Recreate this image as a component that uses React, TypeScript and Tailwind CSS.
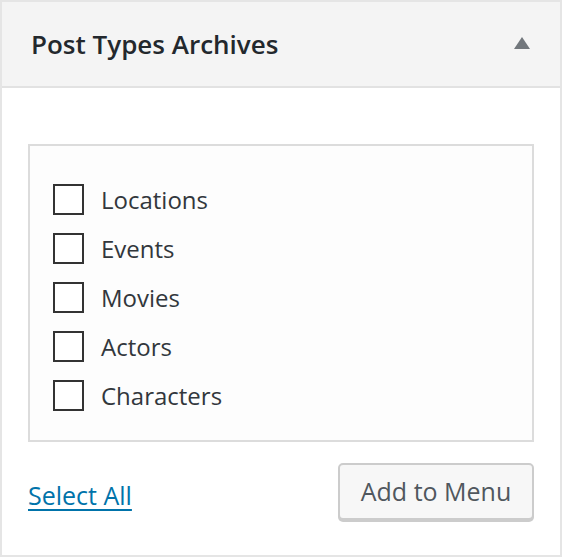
import React from 'react';

const items = ['Locations', 'Events', 'Movies', 'Actors', 'Characters'];

const App: React.FC = () => {
    return (
        <div
            className="w-[562px] h-[557px] border-2 border-[#e5e5e5] bg-white flex flex-col"
            style={{ fontFamily: '"Open Sans", "Noto Sans", sans-serif' }}
        >
            <div className="h-[86px] shrink-0 bg-[#f4f4f4] border-b-2 border-[#e2e2e2] flex items-center justify-between pl-[29px] pr-[30px]">
                <h2 className="text-[26px] font-semibold text-[#23282d] leading-none -mt-[1px]">
                    Post Types Archives
                </h2>
                <svg width="16" height="12" viewBox="0 0 16 12" className="-mt-[2px]">
                    <polygon points="8,0 16,12 0,12" fill="#72777c" />
                </svg>
            </div>
            <div className="px-[26px] pt-[56px]">
                <div className="h-[298px] border-2 border-[#dcdcdc] bg-[#fdfdfd] pl-[23px] pt-[38px]">
                    <ul className="flex flex-col gap-[18px]">
                        {items.map((item) => (
                            <li key={item} className="flex items-center h-[31px]">
                                <span className="w-[31px] h-[31px] border-2 border-[#333] bg-white shrink-0" />
                                <span className="ml-[17px] text-[24px] text-[#32373c] leading-none">
                                    {item}
                                </span>
                            </li>
                        ))}
                    </ul>
                </div>
                <div className="flex items-center justify-between mt-[21px]">
                    <a
                        href="#"
                        className="text-[25px] text-[#0073aa] underline underline-offset-[4px] decoration-2 mt-[8px]"
                    >
                        Select All
                    </a>
                    <button
                        type="button"
                        className="w-[196px] h-[57px] rounded-[5px] border-2 border-[#cccccc] bg-[#f7f7f7] shadow-[0_2px_0_#cccccc] text-[25px] text-[#50575e]"
                    >
                        Add to Menu
                    </button>
                </div>
            </div>
        </div>
    );
};

export default App;
